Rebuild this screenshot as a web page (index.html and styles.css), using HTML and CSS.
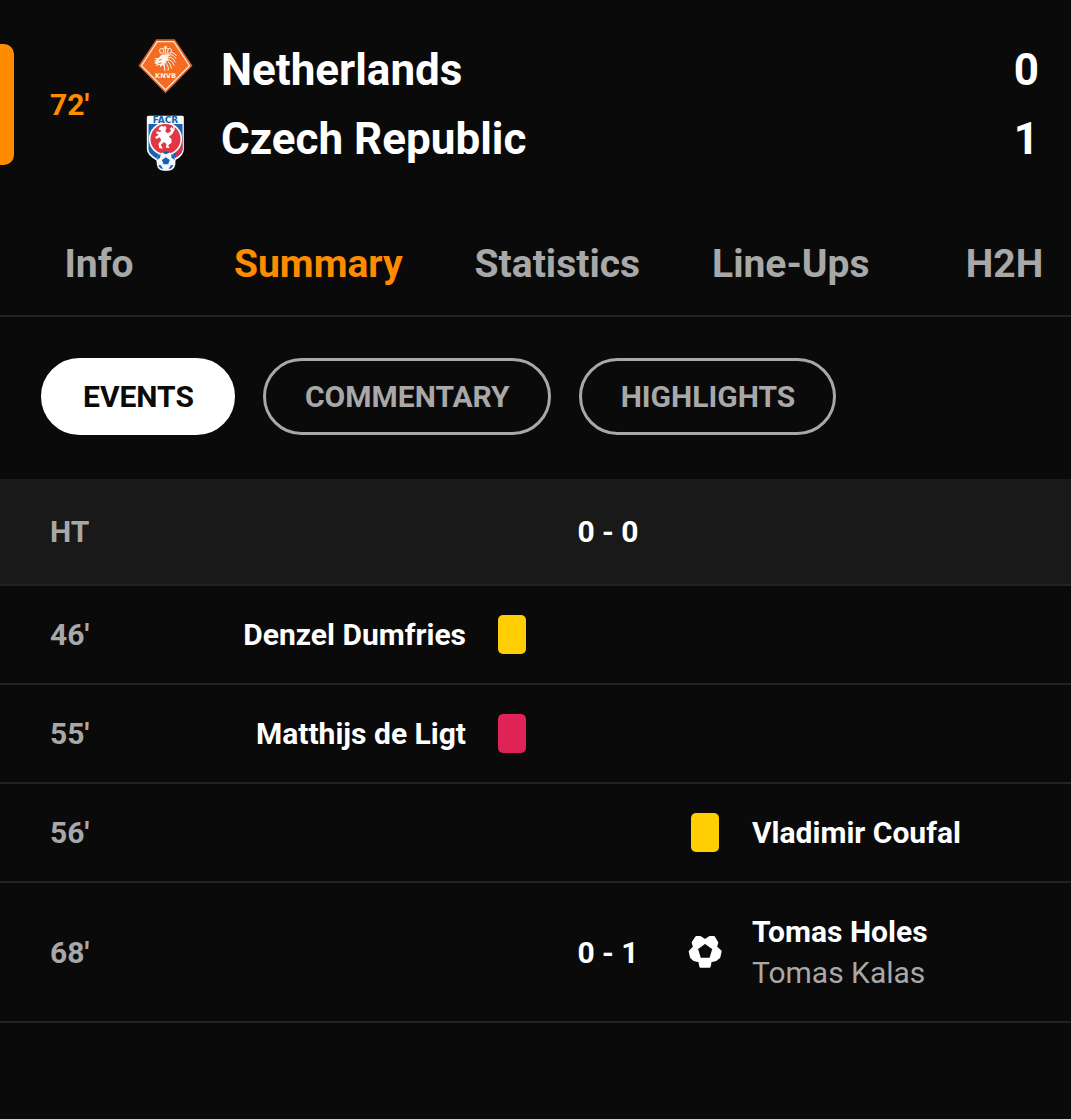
FILE: index.html
```html
<!DOCTYPE html>
<html lang="en">
<head>
    <meta charset="UTF-8">
    <meta name="viewport" content="width=device-width, initial-scale=1.0">
    <title>Netherlands - Czech Republic</title>
    <link rel="stylesheet" href="styles.css">
</head>
<body>
    <header class="match">
        <span class="match-time">72'</span>
        <div class="crests">
            <svg class="crest" viewBox="0 0 164 168" aria-hidden="true">
                <path d="M54 1H110L163 80L82 163L1 80Z" fill="#d4622c"/>
                <path d="M57 8H107L154 80L82 153L10 80Z" fill="#f36c21" stroke="#fde3d0" stroke-width="4"/>
                <g fill="none" stroke="#fff3e8" stroke-width="3" stroke-linecap="round">
                    <path d="M66 41L64 32Q69 25 75 30Q82 21 89 30Q96 25 100 32L98 41Z"/>
                    <path d="M82 22V38M78 24H86M75 31L77 38M90 31L88 38"/>
                    <path d="M96 46Q108 48 113 58M97 54Q107 58 111 69M94 62Q104 67 108 79M90 68Q98 75 100 88M86 76Q93 84 90 94M79 82L80 95M101 40Q112 44 115 50"/>
                </g>
                <path d="M70 47L92 45L96 50L88 52L99 56L88 58L94 64L83 66L86 74L79 73L81 84L72 79L66 85L65 77L51 82L57 76L46 72L55 69L47 65L56 62L48 58L61 57Z" fill="#fff3e8"/>
                <path d="M62 64L70 61M60 74L70 72" stroke="#f36c21" stroke-width="3"/>
                <text x="82" y="117" class="crest-text knvb">KNVB</text>
            </svg>
            <svg class="crest" viewBox="22 22 164 168" aria-hidden="true">
                <path d="M53 24H155Q159 24 159 29V125Q159 145 134 157Q136 188 113 189H98Q75 188 78 159Q48 143 48 125V29Q48 24 53 24Z" fill="#f5f9fc"/>
                <path d="M53 49H155V125Q154 141 128 154L84 156Q53 141 53 125Z" fill="#1763ad"/>
                <path d="M155 85V125Q154 141 131 151Z" fill="#d92f43"/>
                <circle cx="104" cy="94" r="50" fill="#f5f9fc"/>
                <circle cx="104" cy="94" r="45" fill="#e33643"/>
                <text x="104" y="45" class="crest-text facr">FACR</text>
                <path d="M86 59L93 54L98 58L103 54L107 61L103 71L111 77L121 70L117 63L123 57L128 67L124 80L114 87L122 94L122 105L112 113L116 121L105 120L107 109L99 103L90 112L96 123L85 121L83 108L91 98L87 89L76 94L73 88L84 81L76 77L77 71L88 73L92 69L83 66Z" fill="#fff"/>
                <path d="M121 78Q134 65 128 54" fill="none" stroke="#fff" stroke-width="4"/>
                <circle cx="105" cy="160" r="28" fill="#f5f9fc"/>
                <g fill="#1763ad">
                    <path d="M105 149L117 157L112 170H98L93 157Z"/>
                    <path d="M95 135L105 140L116 135L111 131H100Z"/>
                    <path d="M78 157L88 150L89 139L81 145Z"/>
                    <path d="M132 157L122 150L121 139L129 145Z"/>
                    <path d="M82 172L90 173L97 184L88 182Z"/>
                    <path d="M128 172L120 173L113 184L122 182Z"/>
                </g>
            </svg>
        </div>
        <div class="teams">
            <div class="team">
                <h1 class="team-name">Netherlands</h1>
                <span class="team-score">0</span>
            </div>
            <div class="team">
                <h1 class="team-name">Czech Republic</h1>
                <span class="team-score">1</span>
            </div>
        </div>
    </header>

    <nav class="tabs">
        <a class="tab" href="#info">Info</a>
        <a class="tab active" href="#summary">Summary</a>
        <a class="tab" href="#statistics">Statistics</a>
        <a class="tab" href="#lineups">Line-Ups</a>
        <a class="tab" href="#h2h">H2H</a>
    </nav>

    <main>
        <div class="filters">
            <button type="button" class="filter active">EVENTS</button>
            <button type="button" class="filter">COMMENTARY</button>
            <button type="button" class="filter">HIGHLIGHTS</button>
        </div>

        <ul class="events">
            <li class="event period">
                <span class="time">HT</span>
                <span class="score">0 - 0</span>
            </li>
            <li class="event">
                <span class="time">46'</span>
                <span class="home">Denzel Dumfries</span>
                <span class="home-icon"><i class="card yellow"></i></span>
            </li>
            <li class="event">
                <span class="time">55'</span>
                <span class="home">Matthijs de Ligt</span>
                <span class="home-icon"><i class="card red"></i></span>
            </li>
            <li class="event">
                <span class="time">56'</span>
                <span class="away-icon"><i class="card yellow"></i></span>
                <span class="away">Vladimir Coufal</span>
            </li>
            <li class="event goal">
                <span class="time">68'</span>
                <span class="score">0 - 1</span>
                <span class="away-icon">
                    <svg class="ball" viewBox="0 0 102 100" role="img" aria-label="Goal">
                        <path fill-rule="evenodd" d="M25 5H37L51 14L65 5H78L88 22L84 35L98 48L94 66L84 74L68 78L65 94H37L34 78L18 74L9 66L5 48L18 35L14 22ZM51 22L27 40L36 70H67L76 40Z"/>
                    </svg>
                </span>
                <span class="away">Tomas Holes<small class="assist">Tomas Kalas</small></span>
            </li>
        </ul>
    </main>
</body>
</html>
```
FILE: styles.css
```css
* {
    box-sizing: border-box;
}

body {
    font-family: Roboto, "Liberation Sans", sans-serif;
    font-size: 30px;
    font-weight: bold;
    line-height: 41px;
    background-color: #0a0a0a;
    color: #fff;
    margin: 0;
    overflow-x: hidden;
}

/* match header */
.match {
    display: flex;
    align-items: center;
    height: 121px;
    margin: 44px 0 47px;
    padding-right: 32px;
}

.match::before {
    content: "";
    width: 14px;
    height: 100%;
    border-radius: 0 10px 10px 0;
    background-color: #ff8c00;
}

.match-time {
    width: 124px;
    padding-left: 36px;
    color: #ff8c00;
}

.crests {
    display: flex;
    flex-direction: column;
    gap: 20px;
    margin-right: 28px;
}

.crest {
    width: 55px;
    height: 56px;
}

.crest-text {
    font-family: "DejaVu Sans", sans-serif;
    font-weight: bold;
    text-anchor: middle;
}

.crest-text.knvb {
    font-size: 20px;
    fill: #fff3e8;
}

.crest-text.facr {
    font-size: 27px;
    fill: #1763ad;
}

.teams {
    flex: 1;
}

.team {
    display: flex;
    align-items: center;
    height: 69px;
    font-size: 44px;
}

.team-name {
    flex: 1;
    margin: 0;
    font-size: 44px;
}

/* tabs */
.tabs {
    display: flex;
    height: 105px;
    overflow: hidden;
    border-bottom: 2px solid #232323;
}

.tab {
    flex: none;
    min-width: 198px;
    padding: 0 36px;
    font-size: 39px;
    line-height: 104px;
    text-align: center;
    text-decoration: none;
    color: #a8a8a8;
}

.tab.active {
    color: #ff8c00;
}

/* filters */
.filters {
    display: flex;
    gap: 28px;
    padding: 41px 41px 44px;
}

.filter {
    height: 77px;
    padding: 0 38px 0 39px;
    border: 3px solid #a8a8a8;
    border-radius: 39px;
    background: none;
    color: #a8a8a8;
    font: inherit;
    cursor: pointer;
}

.filter.active {
    background-color: #fff;
    border-color: #fff;
    color: #0a0a0a;
}

/* events */
.events {
    margin: 0;
    padding: 0;
    list-style: none;
}

.event {
    display: grid;
    grid-template-columns: 145px 1fr 91px 102px 91px 1fr;
    grid-template-areas: "time home home-icon score away-icon away";
    align-items: center;
    min-height: 99px;
    border-bottom: 2px solid #232323;
}

.event.period {
    min-height: 107px;
    background-color: #191919;
}

.event.goal {
    min-height: 140px;
}

.time {
    grid-area: time;
    padding-left: 50px;
    color: #a8a8a8;
}

.home {
    grid-area: home;
    text-align: right;
}

.away {
    grid-area: away;
    padding-left: 2px;
}

.score {
    grid-area: score;
    text-align: center;
}

.home-icon {
    grid-area: home-icon;
}

.away-icon {
    grid-area: away-icon;
}

.home-icon, .away-icon {
    display: flex;
    justify-content: center;
}

.card {
    width: 28px;
    height: 39px;
    border-radius: 5px;
}

.card.yellow {
    background-color: #ffcf03;
}

.card.red {
    background-color: #df2357;
}

.ball {
    width: 34px;
    height: 34px;
    fill: #fff;
    stroke: #fff;
    stroke-width: 6;
    stroke-linejoin: round;
}

.assist {
    display: block;
    font-size: 30px;
    font-weight: normal;
    color: #a8a8a8;
}
```
